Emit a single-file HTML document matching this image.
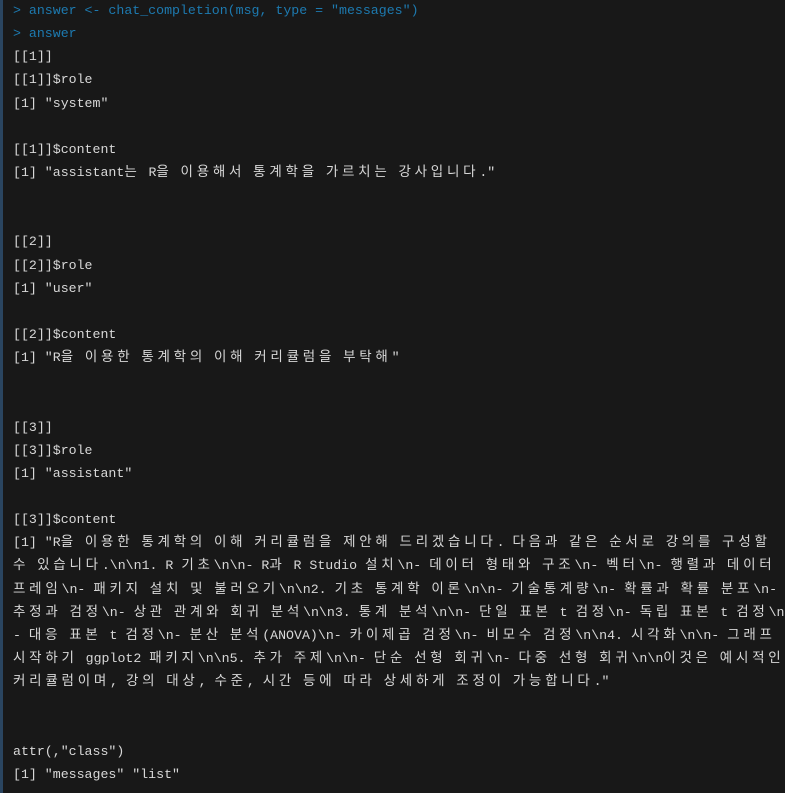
<!DOCTYPE html>
<html><head><meta charset="utf-8">
<style>
html,body{margin:0;padding:0;background:#181818;width:785px;height:793px;overflow:hidden}
.bar{position:absolute;left:0;top:0;width:3px;height:793px;background:#2a4560}
#c{position:absolute;left:13px;top:-1px;font-family:"Liberation Mono","Noto Sans CJK KR",monospace;font-size:13.25px;line-height:23.15px;color:#d8d8d8;white-space:pre}
#c div{height:23.15px;overflow:visible}
.p{color:#1d7ab0}
.k{font-family:"Noto Sans CJK KR",sans-serif;font-size:13.5px;letter-spacing:3.75px;line-height:1}
</style></head><body>
<div class="bar"></div>
<div id="c"><span class="p">&gt; answer &lt;- chat_completion(msg, type = "messages")</span>
<span class="p">&gt; answer</span>
[[1]]
[[1]]$role
[1] "system"

[[1]]$content
[1] "assistant는 R을 이용해서 통계학을 가르치는 강사입니다."


[[2]]
[[2]]$role
[1] "user"

[[2]]$content
[1] "R을 이용한 통계학의 이해 커리큘럼을 부탁해"


[[3]]
[[3]]$role
[1] "assistant"

[[3]]$content
[1] "R을 이용한 통계학의 이해 커리큘럼을 제안해 드리겠습니다. 다음과 같은 순서로 강의를 구성할
수 있습니다.\n\n1. R 기초\n\n- R과 R Studio 설치\n- 데이터 형태와 구조\n- 벡터\n- 행렬과 데이터
프레임\n- 패키지 설치 및 불러오기\n\n2. 기초 통계학 이론\n\n- 기술통계량\n- 확률과 확률 분포\n-
추정과 검정\n- 상관 관계와 회귀 분석\n\n3. 통계 분석\n\n- 단일 표본 t 검정\n- 독립 표본 t 검정\n
- 대응 표본 t 검정\n- 분산 분석(ANOVA)\n- 카이제곱 검정\n- 비모수 검정\n\n4. 시각화\n\n- 그래프
시작하기 ggplot2 패키지\n\n5. 추가 주제\n\n- 단순 선형 회귀\n- 다중 선형 회귀\n\n이것은 예시적인
커리큘럼이며, 강의 대상, 수준, 시간 등에 따라 상세하게 조정이 가능합니다."


attr(,"class")
[1] "messages" "list"</div>
<script>
var c=document.getElementById('c');
var h=c.innerHTML.replace(/[\uAC00-\uD7A3]/g,function(m){return '<span class="k">'+m+'</span>';});
c.innerHTML=h.split('\n').map(function(l){return '<div>'+(l||' ')+'</div>';}).join('');
</script>
</body></html>
